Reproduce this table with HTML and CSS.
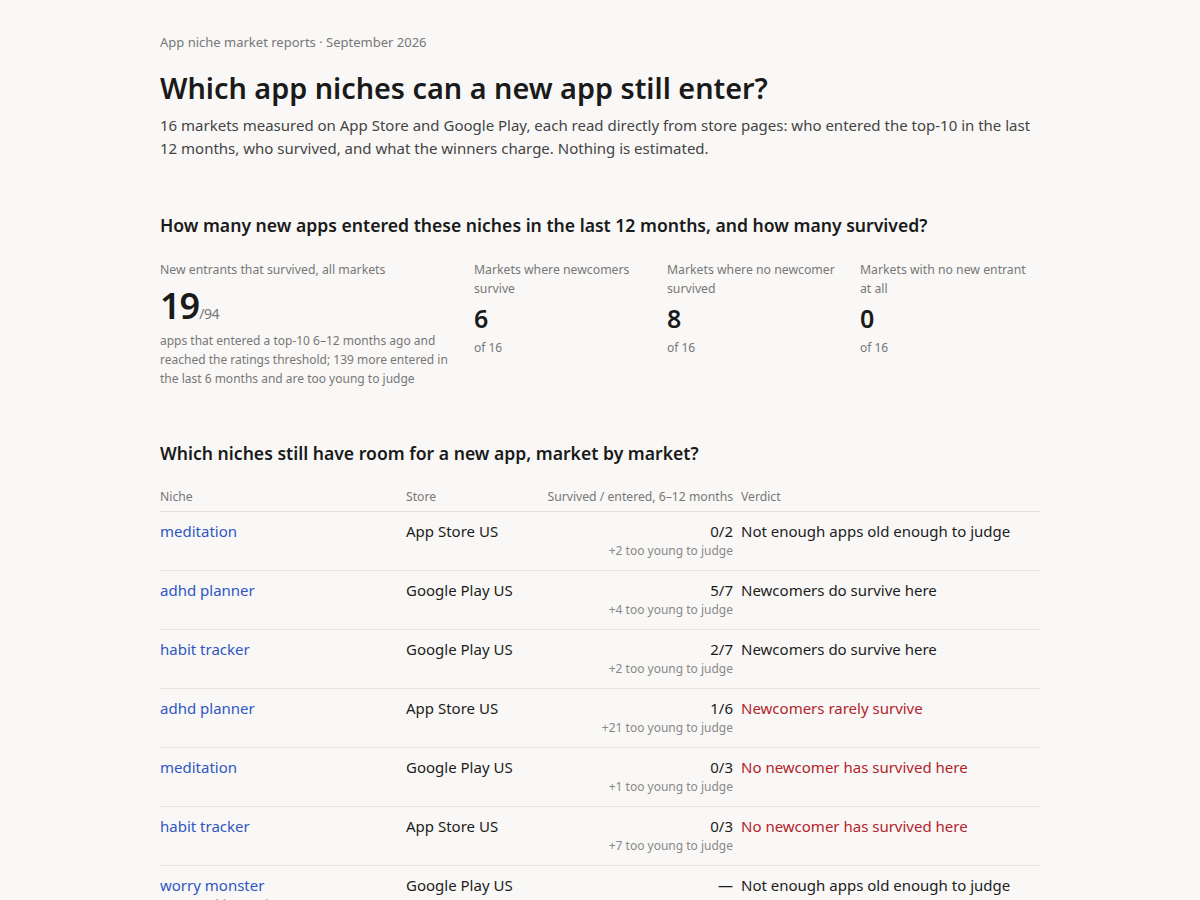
FILE: index.html
```html
<!DOCTYPE html>
<html lang="en">
<head>
<meta charset="utf-8">
<title>Which app niches can a new app still enter?</title>
<link rel="stylesheet" href="styles.css">
</head>
<body>
<main class="page">
  <header class="intro">
    <p class="eyebrow">App niche market reports · September 2026</p>
    <h1 class="title">Which app niches can a new app still enter?</h1>
    <p class="lede">16 markets measured on App Store and Google Play, each read directly from store pages: who entered the top-10 in the last 12 months, who survived, and what the winners charge. Nothing is estimated.</p>
  </header>

  <section class="section">
    <h2 class="section-title">How many new apps entered these niches in the last 12 months, and how many survived?</h2>
    <div class="stats">
      <div class="stat">
        <div class="stat-label">New entrants that survived, all markets</div>
        <div class="stat-big">19<span class="stat-of">/94</span></div>
        <div class="stat-note">apps that entered a top-10 6–12 months ago and reached the ratings threshold; 139 more entered in the last 6 months and are too young to judge</div>
      </div>
      <div class="stat">
        <div class="stat-label">Markets where newcomers survive</div>
        <div class="stat-num">6</div>
        <div class="stat-note">of 16</div>
      </div>
      <div class="stat">
        <div class="stat-label">Markets where no newcomer survived</div>
        <div class="stat-num">8</div>
        <div class="stat-note">of 16</div>
      </div>
      <div class="stat">
        <div class="stat-label">Markets with no new entrant at all</div>
        <div class="stat-num">0</div>
        <div class="stat-note">of 16</div>
      </div>
    </div>
  </section>

  <section class="section">
    <h2 class="section-title">Which niches still have room for a new app, market by market?</h2>
    <table class="markets">
      <colgroup>
        <col class="c-niche"><col class="c-store"><col class="c-surv"><col class="c-verdict">
      </colgroup>
      <thead>
        <tr><th>Niche</th><th>Store</th><th class="num">Survived / entered, 6–12 months</th><th>Verdict</th></tr>
      </thead>
      <tbody>
        <tr><td><a href="#" class="niche">meditation</a></td><td>App Store US</td><td class="num">0/2<span class="sub">+2 too young to judge</span></td><td>Not enough apps old enough to judge</td></tr>
        <tr><td><a href="#" class="niche">adhd planner</a></td><td>Google Play US</td><td class="num">5/7<span class="sub">+4 too young to judge</span></td><td>Newcomers do survive here</td></tr>
        <tr><td><a href="#" class="niche">habit tracker</a></td><td>Google Play US</td><td class="num">2/7<span class="sub">+2 too young to judge</span></td><td>Newcomers do survive here</td></tr>
        <tr><td><a href="#" class="niche">adhd planner</a></td><td>App Store US</td><td class="num">1/6<span class="sub">+21 too young to judge</span></td><td class="bad">Newcomers rarely survive</td></tr>
        <tr><td><a href="#" class="niche">meditation</a></td><td>Google Play US</td><td class="num">0/3<span class="sub">+1 too young to judge</span></td><td class="bad">No newcomer has survived here</td></tr>
        <tr><td><a href="#" class="niche">habit tracker</a></td><td>App Store US</td><td class="num">0/3<span class="sub">+7 too young to judge</span></td><td class="bad">No newcomer has survived here</td></tr>
        <tr><td><a href="#" class="niche">worry monster</a><span class="sub">no apps old enough</span></td><td>Google Play US</td><td class="num">—</td><td>Not enough apps old enough to judge</td></tr>
        <tr><td><a href="#" class="niche">sleep sounds</a></td><td>App Store US</td><td class="num">3/8<span class="sub">+9 too young to judge</span></td><td>Newcomers do survive here</td></tr>
      </tbody>
    </table>
  </section>
</main>
</body>
</html>
```

FILE: styles.css
```css
html, body {
  margin: 0;
  padding: 0;
  background: #f9f8f6;
}
body {
  font-family: "Noto Sans", "Open Sans", "DejaVu Sans", sans-serif;
  color: #1c1c1c;
}
.page {
  width: 880px;
  margin: 0 auto;
  padding: 32px 0 40px;
}
.eyebrow {
  margin: 0;
  font-size: 13px;
  line-height: 20px;
  color: #777;
}
.title {
  margin: 17px 0 0;
  font-size: 28.8px;
  line-height: 38px;
  font-weight: 600;
  color: #1a1a1a;
}
.lede {
  margin: 7px 0 0;
  font-size: 15px;
  line-height: 23px;
  color: #444;
}
.section {
  margin-top: 52px;
}
.section-title {
  margin: 0;
  font-size: 17.6px;
  line-height: 26px;
  font-weight: 600;
  color: #1a1a1a;
}
.stats {
  display: grid;
  grid-template-columns: 290px 169px 169px 1fr;
  column-gap: 24px;
  margin-top: 22px;
}
.stat-label {
  font-size: 12.25px;
  line-height: 19px;
  color: #777;
}
.stat-big {
  margin-top: 10px;
  font-size: 36px;
  line-height: 34px;
  font-weight: 600;
  color: #1a1a1a;
  letter-spacing: -1px;
}
.stat-of {
  font-size: 14px;
  font-weight: 400;
  color: #777;
  letter-spacing: -0.5px;
}
.stat-num {
  margin-top: 4px;
  font-size: 25px;
  line-height: 32px;
  font-weight: 600;
  color: #1a1a1a;
}
.stat-note {
  margin-top: 4px;
  font-size: 12px;
  line-height: 19px;
  color: #777;
}
.stat:first-child .stat-note {
  margin-top: 0;
}
.markets {
  width: 100%;
  margin-top: 21px;
  border-collapse: collapse;
  table-layout: fixed;
}
.c-niche { width: 246px; }
.c-store { width: 135px; }
.c-surv { width: 200px; }
.markets th {
  text-align: left;
  font-size: 12.2px;
  line-height: 19px;
  font-weight: 400;
  color: #777;
  padding: 0 8px 5px 0;
  border-bottom: 1px solid #e3e1dd;
  white-space: nowrap;
}
.markets td {
  vertical-align: top;
  font-size: 15px;
  line-height: 22px;
  color: #1c1c1c;
  padding: 8px 8px 9px 0;
  border-bottom: 1px solid #e8e6e2;
  height: 41px;
}
.markets .num {
  text-align: right;
}
.markets td.num { white-space: nowrap; }
.niche {
  color: #2f56c2;
  text-decoration: none;
}
.sub {
  display: block;
  margin-top: -1px;
  font-size: 12px;
  line-height: 20px;
  color: #888;
}
.markets td.bad { color: #b3232b; }
```
